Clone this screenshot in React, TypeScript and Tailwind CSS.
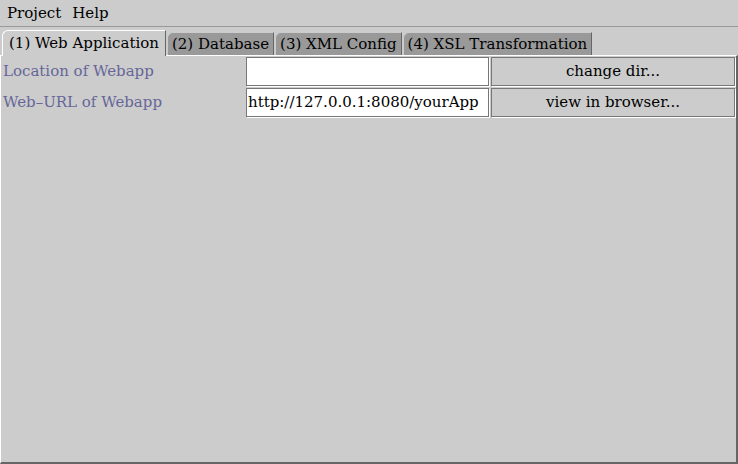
import React from 'react';

const tabs = ['(1) Web Application', '(2) Database', '(3) XML Config', '(4) XSL Transformation'];

const rows = [
  { label: 'Location of Webapp', value: '', action: 'change dir...' },
  { label: 'Web–URL of Webapp', value: 'http://127.0.0.1:8080/yourApp', action: 'view in browser...' },
];

const App: React.FC = () => {
  return (
    <div className="w-[738px] h-[464px] bg-[#cccccc] flex flex-col text-black font-[family-name:'DejaVu_Serif',serif] text-[15px] overflow-hidden">
      <div className="h-[27px] flex items-center gap-[11px] px-[7px] border-b border-[#999999] shrink-0">
        <span>Project</span>
        <span>Help</span>
      </div>

      <div className="h-[28px] flex items-end pl-[2px] gap-[1px] shrink-0">
        {tabs.map((t, i) => (
          <div
            key={t}
            className={
              i === 0
                ? 'h-[26px] px-[6px] flex items-center bg-[#cccccc] border-t border-l border-white border-r border-r-[#666666] rounded-tl-[6px] relative top-[1px] z-10'
                : 'h-[23px] px-[4px] flex items-center bg-[#999999] border-t border-l border-[#cccccc] border-r border-r-[#666666] rounded-tl-[6px]'
            }
          >
            {t}
          </div>
        ))}
      </div>

      <div className="flex-1 border-t border-l border-white border-r-2 border-b-2 border-r-[#666666] border-b-[#666666] pt-[1px] pr-[2px]">
        <div className="grid grid-cols-[243px_243px_244px] gap-x-[2px] gap-y-[2px]">
          {rows.map((r) => (
            <React.Fragment key={r.label}>
              <div className="h-[29px] flex items-center pl-[2px] text-[#666699]">{r.label}</div>
              <div className="h-[29px] bg-white border border-[#777777] shadow-[1px_1px_0_#ffffff] flex items-center px-[1px] whitespace-nowrap overflow-hidden">
                {r.value}
              </div>
              <div className="h-[29px] border border-[#777777] shadow-[1px_1px_0_#ffffff] flex items-center justify-center">
                {r.action}
              </div>
            </React.Fragment>
          ))}
        </div>
      </div>
    </div>
  );
};

export default App;
